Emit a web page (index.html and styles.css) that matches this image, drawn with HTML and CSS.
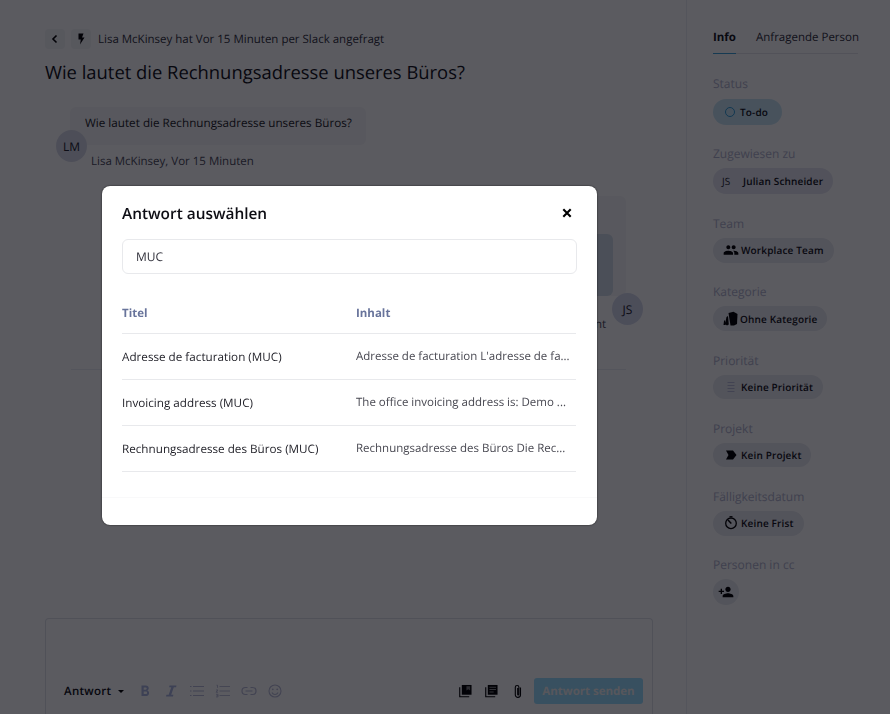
FILE: index.html
```html
<!DOCTYPE html>
<html lang="de">
<head>
<meta charset="utf-8">
<title>Antwort auswählen</title>
<link rel="stylesheet" href="styles.css">
</head>
<body>
<div class="page">
  <main class="main">
    <div class="crumbs">
      <span class="crumb-btn"><svg width="12" height="12" viewBox="0 0 12 12"><path d="M7.500 2.500 4 6l3.500 3.500" fill="none" stroke="#000" stroke-width="1.600"/></svg></span>
      <span class="crumb-btn"><svg width="12" height="14" viewBox="0 0 12 14"><path d="M3.500 1.500h5L7 5.500h2.500L5 12.500l.8-5H3.500z" fill="#000"/></svg></span>
      <span class="crumb-text">Lisa McKinsey hat Vor 15 Minuten per Slack angefragt</span>
    </div>
    <h1 class="title">Wie lautet die Rechnungsadresse unseres Büros?</h1>
    <div class="thread">
      <div class="msg">
        <div class="bubble">Wie lautet die Rechnungsadresse unseres Büros?</div>
        <span class="avatar avatar-lm">LM</span>
        <div class="meta">Lisa McKinsey, Vor 15 Minuten</div>
      </div>
      <div class="msg-right">
        <div class="bubble-right"><div class="quote"></div></div>
        <span class="avatar avatar-js">JS</span>
        <div class="meta-right">nt</div>
      </div>
      <div class="divider"></div>
    </div>
    <div class="composer">
      <div class="toolbar">
        <span class="mode">Antwort</span><span class="caret"></span>
        <svg class="tool" width="16" height="16" viewBox="0 0 16 16"><path d="M4.500 2.500h4.200c2 0 3 1 3 2.700 0 1-.5 1.800-1.300 2.200 1.100.4 1.700 1.300 1.700 2.500 0 2-1.300 3.100-3.400 3.100H4.500zm2.200 1.900v2.300h1.800c.8 0 1.200-.4 1.200-1.150 0-.75-.4-1.150-1.200-1.150zm0 4.100v2.500h2c.9 0 1.400-.45 1.400-1.250S9.600 8.500 8.700 8.500z" fill="#a9b5de"/></svg>
        <svg class="tool" width="16" height="16" viewBox="0 0 16 16"><path d="M6.500 2.500h7l-.4 1.800h-2.300L8.200 11.700h2.200l-.4 1.800H3l.4-1.800h2.300l2.600-7.400H6.100z" fill="#a9b5de"/></svg>
        <svg class="tool" width="16" height="16" viewBox="0 0 16 16"><path d="M4 3.500h11M4 8h11M4 12.500h11M1 3.500h1.500M1 8h1.500M1 12.500h1.500" fill="none" stroke="#b8bbd6" stroke-width="1.100"/></svg>
        <svg class="tool" width="16" height="16" viewBox="0 0 16 16"><path d="M4.500 3.500h10.500M4.500 8h10.500M4.500 12.500h10.500M1.500 2.200h1v2.600M1 7h2L1 9.200h2M1 11.300h2v2.600H1M1.500 12.600H3" fill="none" stroke="#b8bbd6" stroke-width=".9"/></svg>
        <svg class="tool" width="16" height="16" viewBox="0 0 16 16"><path d="M6.500 4.500H4.500a3.500 3.500 0 0 0 0 7h2M9.500 4.500h2a3.500 3.500 0 0 1 0 7h-2M4.500 8h7" fill="none" stroke="#b8bbd6" stroke-width="1.200"/></svg>
        <svg class="tool" width="16" height="16" viewBox="0 0 16 16"><circle cx="8" cy="8" r="6" fill="none" stroke="#b8bbd6" stroke-width="1.100"/><circle cx="5.800" cy="6.300" r=".9" fill="#b8bbd6"/><circle cx="10.200" cy="6.300" r=".9" fill="#b8bbd6"/><path d="M4.900 9.500c.7 1.300 1.800 2 3.100 2s2.400-.7 3.100-2" fill="none" stroke="#b8bbd6" stroke-width="1.100"/></svg>
        <span class="spacer"></span>
        <svg class="act" width="13" height="14" viewBox="0 0 14 14"><path d="M.8 3v10.200H11" fill="none" stroke="#000" stroke-width="1.200"/><path d="M3 .5h10.500V11H3z" fill="#000"/><path d="M8 2h4v4.500l-2-1.300L8 6.500z" fill="#777"/></svg>
        <svg class="act act-last" width="13" height="14" viewBox="0 0 14 14"><path d="M.8 3v10.200H11" fill="none" stroke="#000" stroke-width="1.200"/><path d="M3 .5h10.500V11H3z" fill="#000"/><path d="M4.800 3h7M4.800 5.500h7M4.800 8h4.500" stroke="#888" stroke-width="1.100"/></svg>
        <svg class="clip" width="10" height="15" viewBox="0 0 10 15"><path d="M7.500 3.500v7.300a2.600 2.600 0 0 1-5.200 0V3.300a1.800 1.800 0 0 1 3.600 0v7c0 .9-1.200.9-1.200 0V4" fill="none" stroke="#000" stroke-width="1.100"/></svg>
        <span class="send">Antwort senden</span>
      </div>
    </div>
  </main>
  <aside class="side">
    <div class="tabs">
      <span class="tab tab-active">Info</span>
      <span class="tab">Anfragende Person</span>
    </div>
    <section class="field field-status">
      <div class="label">Status</div>
      <span class="pill pill-status"><span class="ring"></span>To-do</span>
    </section>
    <section class="field field-assignee">
      <div class="label">Zugewiesen zu</div>
      <span class="pill pill-assignee"><span class="pill-avatar">JS</span>Julian Schneider</span>
    </section>
    <section class="field field-team">
      <div class="label">Team</div>
      <span class="pill"><svg class="pill-icon" width="16" height="16" viewBox="0 0 24 24"><path d="M16 11c1.660 0 2.990-1.340 2.990-3S17.660 5 16 5s-3 1.340-3 3 1.340 3 3 3zm-8 0c1.660 0 2.990-1.340 2.990-3S9.660 5 8 5 5 6.340 5 8s1.340 3 3 3zm0 2c-2.330 0-7 1.170-7 3.500V19h14v-2.500C15 14.170 10.330 13 8 13zm8 0c-.29 0-.62.020-.97.050 1.160.84 1.970 1.970 1.970 3.450V19h6v-2.500c0-2.330-4.670-3.500-7-3.500z"/></svg>Workplace Team</span>
    </section>
    <section class="field">
      <div class="label">Kategorie</div>
      <span class="pill"><svg class="pill-icon" width="15" height="15" viewBox="0 0 15 15"><path d="M5.500 2 10.500.8 14.500 3l-.5 10-3 1.500H7.500z"/><path d="M3.500 6 5 5l.8 8.500-1.800 1L2 13zM1 10l1-1 .5 5H.5z"/></svg>Ohne Kategorie</span>
    </section>
    <section class="field">
      <div class="label">Priorität</div>
      <span class="pill"><svg class="pill-icon" width="16" height="16" viewBox="0 0 16 16"><path d="M4.500 3.500h7M4.500 6.500h7M4.500 9.500h7M4.500 12.500h7" stroke="#b8bbd6" stroke-width="1.100" fill="none"/></svg>Keine Priorität</span>
    </section>
    <section class="field">
      <div class="label">Projekt</div>
      <span class="pill"><svg class="pill-icon" width="16" height="16" viewBox="0 0 16 16"><path d="M3 3.500h7l3.500 4.500-3.500 4.500H3l2.500-4.500z"/></svg>Kein Projekt</span>
    </section>
    <section class="field">
      <div class="label">Fälligkeitsdatum</div>
      <span class="pill"><svg class="pill-icon" width="16" height="16" viewBox="0 0 16 16"><circle cx="8" cy="8.300" r="5.300" fill="none" stroke="#000" stroke-width="1.300"/><path d="M5 5 8.300 8.500" stroke="#000" stroke-width="1.500"/><path d="M6.500 1.700h3" stroke="#000" stroke-width="1.200"/></svg>Keine Frist</span>
    </section>
    <section class="field">
      <div class="label">Personen in cc</div>
      <span class="pill pill-round"><svg width="16" height="16" viewBox="0 0 24 24"><path d="M15 12c2.210 0 4-1.790 4-4s-1.790-4-4-4-4 1.790-4 4 1.790 4 4 4zm-9-2V7H4v3H1v2h3v3h2v-3h3v-2H6zm9 4c-2.670 0-8 1.340-8 4v2h16v-2c0-2.660-5.330-4-8-4z"/></svg></span>
    </section>
  </aside>
</div>
<div class="overlay">
  <div class="modal">
    <div class="modal-head">
      <h2 class="modal-title">Antwort auswählen</h2>
      <svg class="close" width="10" height="10" viewBox="0 0 10 10"><path d="M1.300 1.300l7.400 7.400M8.700 1.300 1.300 8.700" stroke="#000" stroke-width="2.100"/></svg>
    </div>
    <div class="search">MUC</div>
    <table class="table">
      <thead>
        <tr><th>Titel</th><th>Inhalt</th></tr>
      </thead>
      <tbody>
        <tr><td>Adresse de facturation (MUC)</td><td>Adresse de facturation L'adresse de fa...</td></tr>
        <tr><td>Invoicing address (MUC)</td><td>The office invoicing address is: Demo ...</td></tr>
        <tr><td>Rechnungsadresse des Büros (MUC)</td><td>Rechnungsadresse des Büros Die Rec...</td></tr>
      </tbody>
    </table>
    <div class="modal-foot"></div>
  </div>
</div>
</body>
</html>
```
FILE: styles.css
```css
* { box-sizing: border-box; }
html, body { margin: 0; height: 100%; overflow: hidden; }
body { background: #fff; color: #2b2b36; font-family: "Open Sans", "Liberation Sans", sans-serif; text-rendering: geometricPrecision; }
.page { display: flex; width: 890px; height: 714px; }
.main { position: relative; width: 687px; padding: 29px 33px 0 45px; border-right: 1px solid #eceef2; display: flex; flex-direction: column; }
.crumbs { display: flex; align-items: center; height: 20px; gap: 6px; }
.crumb-btn { width: 20px; height: 20px; border-radius: 4px; background: #f4f5f7; display: flex; align-items: center; justify-content: center; }
.crumb-text { margin-left: 1px; font-size: 11.500px; color: #30303c; }
.title { margin: 11px 0 0; font-size: 18.400px; line-height: 25px; font-weight: 400; color: #111118; }
.thread { position: relative; flex: 1; }
.msg { position: relative; margin: 22px 0 0 25px; height: 60px; }
.bubble { width: 296px; height: 38px; padding: 7px 15px; background: #f5f6f8; border-radius: 6px; font-size: 11.700px; line-height: 18px; color: #1c1c26; white-space: nowrap; }
.avatar { position: absolute; width: 31px; height: 32px; border-radius: 50%; display: flex; align-items: center; justify-content: center; font-size: 12px; color: #22222c; }
.avatar-lm { left: -14px; top: 23px; background: #d8dbe8; }
.meta { margin: 9px 0 0 21px; font-size: 11.500px; line-height: 16px; color: #4a4a58; }
.msg-right { position: absolute; left: 0; right: 0; top: 111px; height: 150px; }
.bubble-right { position: absolute; left: 450px; top: 0; width: 131px; height: 100px; background: #f5f6f8; border-radius: 6px; }
.quote { position: absolute; left: 60px; top: 38px; width: 58px; height: 62px; background: #d0dce7; border-radius: 6px; }
.avatar-js { left: 567px; top: 97px; background: #d5d9ec; }
.meta-right { position: absolute; left: 550px; top: 121px; font-size: 11.500px; line-height: 16px; color: #4a4a58; }
.divider { position: absolute; left: 26px; top: 284px; width: 555px; height: 1px; background: #eceef2; }
.composer { height: 96px; border: 1px solid #dfe2e8; border-bottom: 0; border-radius: 4px 4px 0 0; display: flex; align-items: flex-end; padding: 0 9px 10px 18px; }
.toolbar { flex: 1; display: flex; align-items: center; height: 26px; }
.mode { font-size: 11.500px; font-weight: 600; color: #0d0d14; letter-spacing: .3px; }
.caret { width: 0; height: 0; margin: 0 13px 0 7px; border: 3px solid transparent; border-top-color: #000; border-bottom: 0; }
.tool { margin-right: 10px; }
.spacer { flex: 1; }
.act { margin-right: 13px; }
.act-last { margin-right: 15px; }
.clip { margin-right: 11px; }
.send { width: 109px; height: 26px; display: flex; align-items: center; justify-content: center; background: #9adefe; border-radius: 3px; font-size: 11.500px; font-weight: 700; color: #f2f2f2; white-space: nowrap; }
.side { width: 203px; padding: 27px 32px 0 26px; }
.tabs { display: flex; gap: 20px; height: 27px; border-bottom: 1px solid #e4e6ec; font-size: 11.500px; line-height: 22px; white-space: nowrap; }
.tab { height: 27px; color: #30303c; }
.tab-active { font-weight: 700; color: #14141c; border-bottom: 1px solid #3aa0d8; }
.field { margin-top: 20.800px; }
.side .field-status { margin-top: 21px; }
.side .field-assignee { margin-top: 20px; }
.side .field-team { margin-top: 21px; }
.label { font-size: 12px; line-height: 17px; color: #b0b3cc; }
.pill { display: inline-flex; align-items: center; height: 24.500px; margin-top: 6px; padding: 0 10px; border-radius: 13px; background: #e8eaef; font-size: 10px; font-weight: 600; color: #111118; letter-spacing: .15px; white-space: nowrap; vertical-align: top; }
.pill-status { height: 26px; margin-top: 7px; background: #c8e6f4; padding: 0 14px 0 12px; }
.pill-assignee { height: 26px; padding: 0 10px 0 9px; background: #e4e6f0; }
.pill-avatar { width: 14px; margin-right: 7px; font-weight: 400; font-size: 10px; color: #22222c; }
.ring { width: 10px; height: 10px; margin-right: 5px; border: 1.500px solid #2f9ad6; border-radius: 50%; }
.pill-icon { margin-right: 2px; fill: #000; flex: none; }
.pill-round { width: 26px; height: 26px; padding: 0; justify-content: center; }
.overlay { position: fixed; inset: 0; background: rgba(3, 3, 11, .65); }
.modal { position: absolute; left: 102px; top: 186px; width: 495px; height: 339px; padding: 0 20px; background: #fff; border-radius: 8px; display: flex; flex-direction: column; box-shadow: 0 0 1.500px #000; }
.modal-head { display: flex; align-items: center; justify-content: space-between; height: 53px; padding-top: 1px; }
.modal-title { margin: 0; font-size: 15.400px; font-weight: 600; color: #0d0d14; }
.close { margin-right: 5px; }
.search { width: 455px; height: 35px; border: 1px solid #e8e9ec; border-radius: 6px; padding: 0 13px; display: flex; align-items: center; font-size: 12px; color: #33333d; }
.table { width: 454px; margin-top: 22px; border-collapse: collapse; table-layout: fixed; font-size: 11.500px; }
.table th { height: 37px; text-align: left; padding: 0 0 2px; font-size: 11.500px; font-weight: 700; color: #68749b; border-bottom: 1px solid #e8e9ec; }
.table th:first-child { width: 234px; }
.table td { height: 46px; padding: 1px 0 0; color: #1e1e26; border-bottom: 1px solid #e8e9ec; white-space: nowrap; }
.table td:first-child { font-size: 11.700px; }
.table td:last-child { color: #494952; }
.modal-foot { position: absolute; left: 0; right: 0; bottom: 0; height: 28px; border-top: 1px solid #f9f9fa; }
```
